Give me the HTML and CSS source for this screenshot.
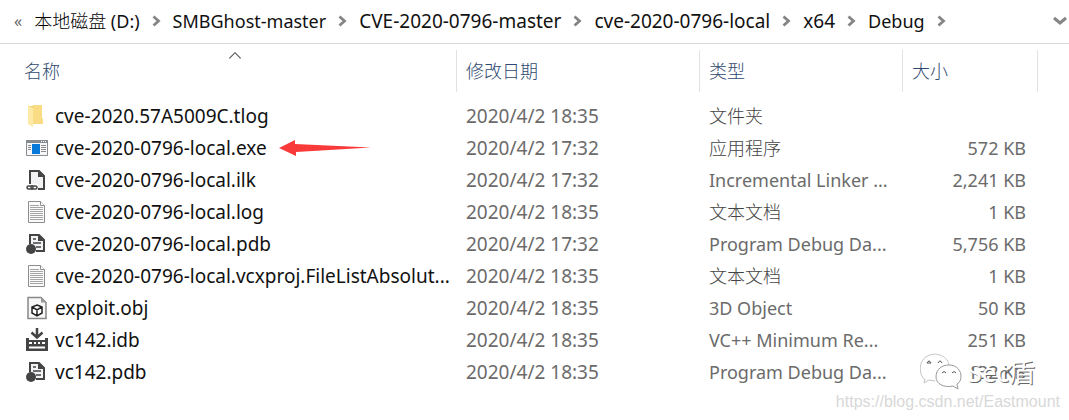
FILE: index.html
```html
<!DOCTYPE html>
<html lang="zh-CN">
<head>
<meta charset="utf-8">
<title>Debug</title>
<link rel="stylesheet" href="styles.css">
</head>
<body>
<svg class="defs" aria-hidden="true">
  <symbol id="chevron" viewBox="0 0 9 12"><path d="M1.5 1.5 6.5 6 1.5 10.5" fill="none" stroke="#858585" stroke-width="2.8"/></symbol>
  <symbol id="folder" viewBox="0 0 24 24"><path d="M4 2h8v17H4z" fill="#f3ca62"/><path d="M8 1h9v13l1 1v5H8z" fill="#f9dc83"/><path d="M3 1l5 3v19l-5-3z" fill="#ffe9a6"/></symbol>
  <symbol id="app" viewBox="0 0 24 24"><path d="M1.5 4.500h21v15h-21z" fill="#f7f7f7" stroke="#858b90"/><path d="M1 4h22v3H1z" fill="#858b90"/><path d="M16 5.500h1m1 0h1m1 0h1" stroke="#fff"/><path d="M7 8h8v10H7z" fill="#0879d8"/><path d="M3 9.500h3m-3 2h3m-3 2h3M16 9.500h5m-5 2h5m-5 2h5m-5 2h5" stroke="#8b8b8b"/></symbol>
  <symbol id="link-file" viewBox="0 0 24 24"><path d="M5 16V3h9l5 5v13h-6" fill="#f2f2f4" stroke="#444" stroke-width="2"/><path d="M13 3v6h6z" fill="#444"/><path d="M1 16h12v7H1z" fill="#fff"/><rect x="2" y="18" width="6" height="3" rx="1.5" fill="#fff" stroke="#444" stroke-width="1.500"/><rect x="6" y="18" width="6" height="3" rx="1.5" fill="none" stroke="#444" stroke-width="1.500"/></symbol>
  <symbol id="text-file" viewBox="0 0 24 24"><path d="M3.500 1.500h12l4 4v17h-16z" fill="#fafafa" stroke="#8d8d8d"/><path d="M15.500 1.500v4h4" fill="#fff" stroke="#8d8d8d"/><path d="M5 5.500h9M5 7.500h13M5 9.500h13M5 11.500h13M5 13.500h13M5 15.500h13M5 17.500h13M5 19.500h13" stroke="#a5a5a5"/></symbol>
  <symbol id="debug-file" viewBox="0 0 24 24"><path d="M5 12V3h9l5 5v11h-8" fill="#f2f2f4" stroke="#444" stroke-width="2"/><path d="M13 2v7h6z" fill="#444"/><path d="M8 7h3M8 11h8M11 15h5" stroke="#444" stroke-width="1.5"/><circle cx="6" cy="17" r="5" fill="#444"/></symbol>
  <symbol id="object-file" viewBox="0 0 24 24"><path d="M3 1.500h13l5 5v16H3z" fill="#f7f7f7" stroke="#888" stroke-width="1.500"/><path d="M16 1.500v5h5z" fill="#999"/><path d="M12 9l5 2v6l-5 3-5-3v-6zM7 11l5 3 5-3M12 14v6" fill="#fff" stroke="#222" stroke-width="1.500"/></symbol>
  <symbol id="database" viewBox="0 0 24 24"><path d="M1 10h3v2h16v-2h3v13H1z" fill="#444"/><path d="M4 15h3m2 0h2m2 0h2m2 0h3" stroke="#fff" stroke-width="2"/><path d="M4 19.500h16" stroke="#fff" stroke-width="2"/><path d="M12 0v9M6.500 4.500l5.500 5 5.500-5" fill="none" stroke="#444" stroke-width="2.500"/></symbol>
</svg>

<nav class="path" aria-label="路径">
  <button class="crumb more" type="button">«</button>
  <button class="crumb" type="button"><span class="cjk">本地磁盘</span> (D:)</button>
  <svg class="chevron"><use href="#chevron"/></svg>
  <button class="crumb" type="button">SMBGhost-master</button>
  <svg class="chevron"><use href="#chevron"/></svg>
  <button class="crumb numbered" type="button">CVE-2020-0796-master</button>
  <svg class="chevron"><use href="#chevron"/></svg>
  <button class="crumb numbered" type="button">cve-2020-0796-local</button>
  <svg class="chevron"><use href="#chevron"/></svg>
  <button class="crumb numbered" type="button">x64</button>
  <svg class="chevron"><use href="#chevron"/></svg>
  <button class="crumb" type="button">Debug</button>
  <svg class="chevron"><use href="#chevron"/></svg>
  <button class="history" type="button" aria-label="历史记录"><svg viewBox="0 0 14 10"><path d="M1 2l6 5 6-5" fill="none" stroke="#858585" stroke-width="3"/></svg></button>
</nav>

<main class="listing">
  <table class="files">
    <colgroup><col><col class="col-date"><col class="col-type"><col class="col-size"><col class="col-rest"></colgroup>
    <thead>
      <tr>
        <th class="first" aria-sort="ascending"><button type="button">名称</button><svg class="sort" viewBox="0 0 12 8"><path d="M1 6.500l5-5 5 5" fill="none" stroke="#555"/></svg></th>
        <th><button type="button">修改日期</button></th>
        <th><button type="button">类型</button></th>
        <th><button type="button">大小</button></th>
        <th></th>
      </tr>
    </thead>
    <tbody>
      <tr><td><div class="name"><svg><use href="#folder"/></svg><span>cve-2020.57A5009C.tlog</span></div></td><td class="date">2020/4/2 18:35</td><td class="cjk">文件夹</td><td class="size"></td><td></td></tr>
      <tr><td><div class="name"><svg><use href="#app"/></svg><span>cve-2020-0796-local.exe</span><svg class="pointer" viewBox="0 0 92 18"><path d="M0 9 16 1v4l76 3.500L17 13v4z" fill="#f93a3a"/></svg></div></td><td class="date">2020/4/2 17:32</td><td class="cjk">应用程序</td><td class="size">572 KB</td><td></td></tr>
      <tr><td><div class="name"><svg><use href="#link-file"/></svg><span>cve-2020-0796-local.ilk</span></div></td><td class="date">2020/4/2 17:32</td><td>Incremental Linker ...</td><td class="size">2,241 KB</td><td></td></tr>
      <tr><td><div class="name"><svg><use href="#text-file"/></svg><span>cve-2020-0796-local.log</span></div></td><td class="date">2020/4/2 18:35</td><td class="cjk">文本文档</td><td class="size">1 KB</td><td></td></tr>
      <tr><td><div class="name"><svg><use href="#debug-file"/></svg><span>cve-2020-0796-local.pdb</span></div></td><td class="date">2020/4/2 17:32</td><td>Program Debug Da...</td><td class="size">5,756 KB</td><td></td></tr>
      <tr><td><div class="name"><svg><use href="#text-file"/></svg><span>cve-2020-0796-local.vcxproj.FileListAbsolut...</span></div></td><td class="date">2020/4/2 18:35</td><td class="cjk">文本文档</td><td class="size">1 KB</td><td></td></tr>
      <tr><td><div class="name"><svg><use href="#object-file"/></svg><span>exploit.obj</span></div></td><td class="date">2020/4/2 18:35</td><td>3D Object</td><td class="size">50 KB</td><td></td></tr>
      <tr><td><div class="name"><svg><use href="#database"/></svg><span>vc142.idb</span></div></td><td class="date">2020/4/2 18:35</td><td>VC++ Minimum Re...</td><td class="size">251 KB</td><td></td></tr>
      <tr><td><div class="name"><svg><use href="#debug-file"/></svg><span>vc142.pdb</span></div></td><td class="date">2020/4/2 18:35</td><td>Program Debug Da...</td><td class="size">132 KB</td><td></td></tr>
    </tbody>
  </table>
  <div class="brand">
    <svg viewBox="0 0 42 38"><g fill="#fff"><path d="M5 27C-2 21-1 8 6 4 16-3 29 4 29 13M15 28l-6-1-5 3 1-4" stroke="#c4c4c4"/><path d="M16 24c0-8 6-12 13-12 8 0 12 6 12 11 0 4-1 6-4 8l1 5-5-3c-9 2-17-2-17-9z" stroke="#999"/></g><path d="M7 10q2-4 4 0zM18 10q2-4 4 0M22 20q2-3 4 0M32 20q2-3 4 0" fill="none" stroke="#555"/></svg>
    <span>Sec盾</span>
  </div>
  <footer class="credit">https://blog.csdn.net/Eastmount</footer>
</main>
</body>
</html>
```
FILE: styles.css
```css
* { box-sizing: border-box; }
body {
  margin: 0;
  background: #fff;
  color: #111;
  font-family: "Noto Sans", "Noto Sans CJK SC", sans-serif;
  font-size: 18px;
  line-height: 24px;
}
button {
  padding: 0;
  border: 0;
  background: none;
  color: inherit;
  font: inherit;
  white-space: nowrap;
}
.defs { position: absolute; width: 0; height: 0; }
.cjk, th { font-family: "Noto Sans CJK SC", sans-serif; font-weight: 300; }

.path {
  display: flex;
  align-items: center;
  gap: 12px;
  height: 44px;
  padding: 0 0 2px 14px;
  border-bottom: 1px solid #d9d9d9;
}
.crumb .cjk { font-weight: 300; color: #000; }
.crumb.numbered { font-size: 19px; }
.crumb.more { color: #666; font-size: 16px; }
.chevron { flex: none; width: 9px; height: 12px; }
.history { margin-left: auto; margin-right: 1px; line-height: 0; }
.history svg { width: 16px; height: 10px; }

.listing { position: relative; padding-top: 6px; }
.files { width: 100%; table-layout: fixed; border-collapse: separate; border-spacing: 0; }
.col-date { width: 243px; }
.col-type { width: 203px; }
.col-size { width: 135px; }
.col-rest { width: 31px; }
th {
  position: relative;
  height: 42px;
  padding: 0 9px 2px;
  border-right: 1px solid #e2e2e2;
  color: #2f4a70;
  text-align: left;
}
th.first { padding-left: 24px; }
th:last-child { border-right: 0; }
.sort { position: absolute; top: 1px; left: 50%; width: 14px; height: 9px; }
tbody::before { content: ""; display: block; height: 8px; }
td { height: 32px; padding: 0 9px; color: #6b6b6b; white-space: nowrap; }
td.cjk { padding-bottom: 2px; color: #444; }
td:first-child { padding: 0 0 0 25px; color: #111; font-size: 19px; }
.name { display: flex; align-items: center; gap: 6px; }
.name svg { flex: none; width: 24px; height: 24px; }
.name .pointer { width: 92px; height: 18px; margin-left: 6px; }
.date { font-size: 19px; }
td.size { padding-right: 12px; text-align: right; }

.brand {
  position: absolute;
  right: 34px;
  bottom: 29px;
  display: flex;
  align-items: center;
  gap: 6px;
  color: #fff;
  font-size: 26px;
  line-height: 38px;
  text-shadow: 1px 1px 0 #666;
}
.brand svg { width: 42px; height: 38px; }
.credit {
  padding: 2px 9px 6px 0;
  color: #d8d8d8;
  font-family: "Liberation Sans", sans-serif;
  font-size: 16px;
  text-align: right;
}
```
